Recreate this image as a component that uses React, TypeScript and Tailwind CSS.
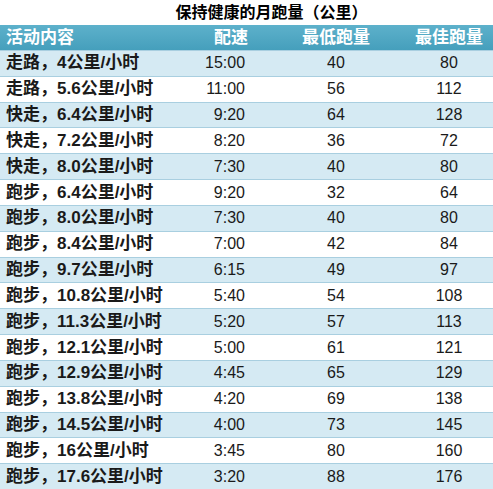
import React from "react";

const rows: [string, string, string, string, string][] = [
  ["走路，", "4公里/小时", "15:00", "40", "80"],
  ["走路，", "5.6公里/小时", "11:00", "56", "112"],
  ["快走，", "6.4公里/小时", "9:20", "64", "128"],
  ["快走，", "7.2公里/小时", "8:20", "36", "72"],
  ["快走，", "8.0公里/小时", "7:30", "40", "80"],
  ["跑步，", "6.4公里/小时", "9:20", "32", "64"],
  ["跑步，", "8.0公里/小时", "7:30", "40", "80"],
  ["跑步，", "8.4公里/小时", "7:00", "42", "84"],
  ["跑步，", "9.7公里/小时", "6:15", "49", "97"],
  ["跑步，", "10.8公里/小时", "5:40", "54", "108"],
  ["跑步，", "11.3公里/小时", "5:20", "57", "113"],
  ["跑步，", "12.1公里/小时", "5:00", "61", "121"],
  ["跑步，", "12.9公里/小时", "4:45", "65", "129"],
  ["跑步，", "13.8公里/小时", "4:20", "69", "138"],
  ["跑步，", "14.5公里/小时", "4:00", "73", "145"],
  ["跑步，", "16公里/小时", "3:45", "80", "160"],
  ["跑步，", "17.6公里/小时", "3:20", "88", "176"],
];

const font = { fontFamily: '"Liberation Sans", "Noto Sans CJK SC", sans-serif' };

export default function App() {
  return (
    <div
      className="w-[493px] h-[489px] flex flex-col bg-white text-[#1a1a1a] overflow-hidden"
      style={font}
    >
      <div className="h-[25px] shrink-0 flex items-center justify-center pl-[50px] text-[16px] leading-[20px] font-bold text-black">
        保持健康的月跑量（公里）
      </div>
      <div className="h-[25px] shrink-0 flex items-center bg-gradient-to-b from-[#5DB1CB] to-[#459FBC] text-white text-[17px] leading-[20px] font-bold">
        <div className="w-[205px] pl-[6px]">活动内容</div>
        <div className="w-[52px] text-center whitespace-nowrap">配速</div>
        <div className="w-[158px] text-center">最低跑量</div>
        <div className="w-[68px] text-center">最佳跑量</div>
      </div>
      <div className="flex-1 min-h-0 flex flex-col">
        {rows.map((r, i) => (
          <div
            key={i}
            className={`flex-1 basis-0 min-h-0 flex items-center border-t border-[#A9CFE0] leading-[20px] ${
              i % 2 === 0 ? "bg-[#D5EAF3]" : "bg-white"
            }`}
          >
            <div className="w-[205px] pl-[6px] text-[17px] font-bold whitespace-nowrap">
              {r[0]}
              {r[1]}
            </div>
            <div className="w-[52px] text-right pr-[12px] text-[16px] whitespace-nowrap">
              {r[2]}
            </div>
            <div className="w-[158px] text-center text-[16px]">{r[3]}</div>
            <div className="w-[68px] text-center text-[16px]">{r[4]}</div>
          </div>
        ))}
      </div>
    </div>
  );
}
